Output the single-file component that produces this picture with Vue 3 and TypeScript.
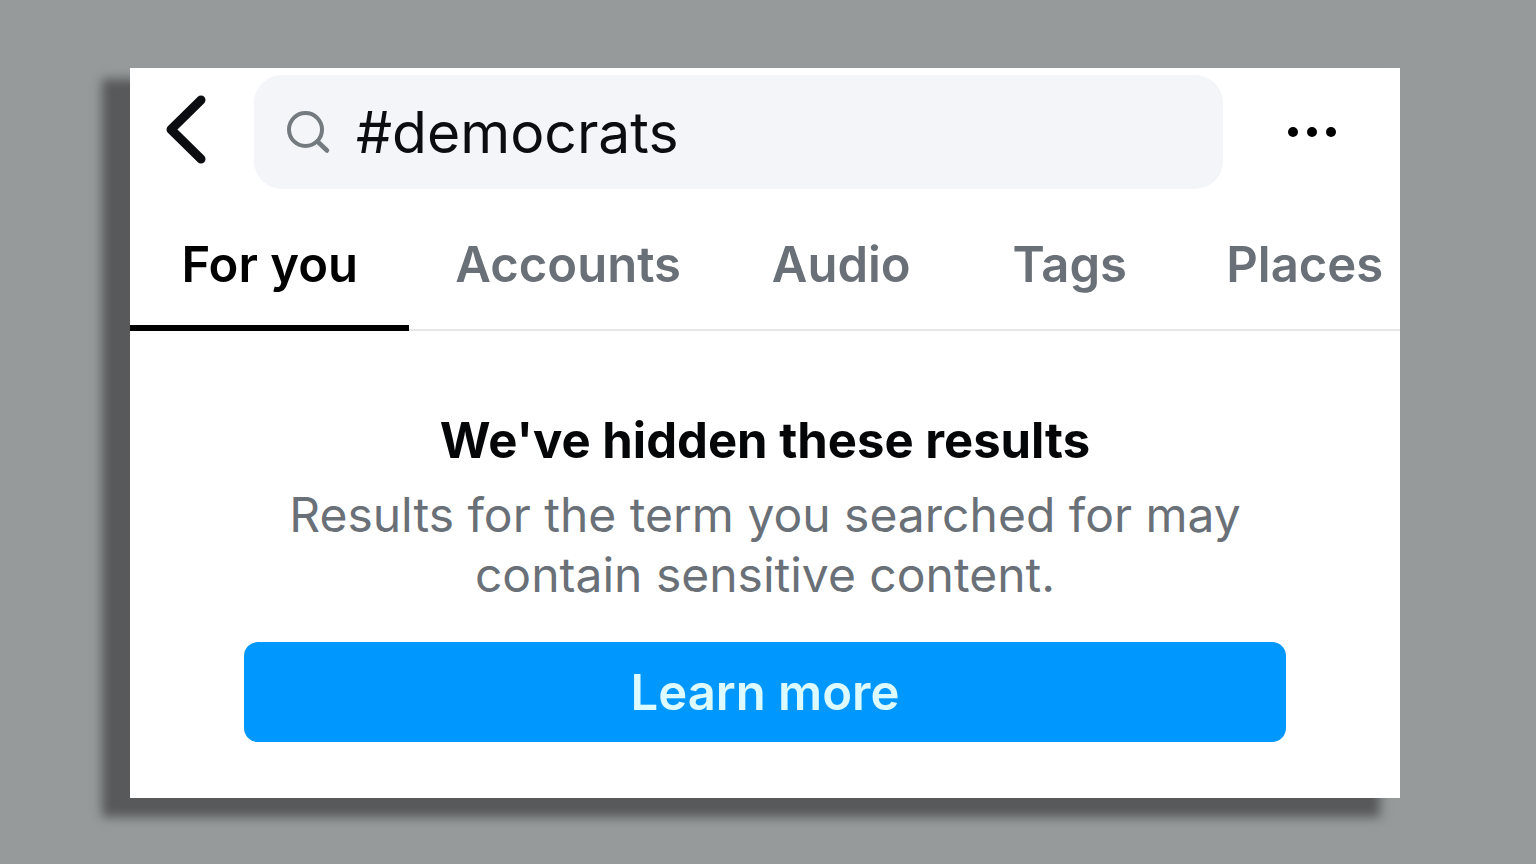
<script setup lang="ts">
import { ref } from 'vue'

const query = ref<string>('#democrats')
const tabs: string[] = ['For you', 'Accounts', 'Audio', 'Tags', 'Places']
const activeTab = ref<string>('For you')
</script>

<template>
  <div class="page">
    <main class="card">
      <header class="bar">
        <button class="icon-button back" type="button" aria-label="Back">
          <svg width="48" height="72" viewBox="0 0 48 72" aria-hidden="true">
            <path d="M39 7 9 36.500 39 66" fill="none" stroke="#0b0d10" stroke-width="9" stroke-linecap="round" stroke-linejoin="round" />
          </svg>
        </button>
        <label class="search">
          <svg width="46" height="46" viewBox="0 0 46 46" aria-hidden="true">
            <circle cx="19.500" cy="20.500" r="16.500" fill="none" stroke="#737a80" stroke-width="4" />
            <path d="M31.500 32.500 41 41.500" fill="none" stroke="#737a80" stroke-width="4.500" stroke-linecap="round" />
          </svg>
          <input v-model="query" type="text" aria-label="Search" />
        </label>
        <button class="icon-button more" type="button" aria-label="More options">
          <svg width="50" height="12" viewBox="0 0 50 12" aria-hidden="true">
            <circle cx="6" cy="6" r="5" />
            <circle cx="25" cy="6" r="5" />
            <circle cx="44" cy="6" r="5" />
          </svg>
        </button>
      </header>

      <nav class="tabs" role="tablist">
        <button
          v-for="tab in tabs"
          :key="tab"
          class="tab"
          :class="{ active: tab === activeTab }"
          type="button"
          role="tab"
          :aria-selected="tab === activeTab"
          @click="activeTab = tab"
        >
          {{ tab }}
        </button>
      </nav>

      <section class="notice">
        <h1>We've hidden these results</h1>
        <p>Results for the term you searched for may contain sensitive content.</p>
        <button class="learn" type="button">Learn more</button>
      </section>
    </main>
  </div>
</template>

<style>
body {
  margin: 0;
  background: #969a9b;
}
</style>

<style scoped>
.page {
  box-sizing: border-box;
  min-height: 100vh;
  padding: 68px 136px 66px 130px;
  display: flex;
  background: #969a9b;
  font-family: Inter, "Liberation Sans", sans-serif;
}
.card {
  flex: 1;
  min-width: 0;
  background: #fff;
  box-shadow: -24px 15px 10px 4px #58595b;
}
button {
  font-family: inherit;
  border: 0;
  margin: 0;
  padding: 0;
  background: none;
  cursor: pointer;
}
.bar {
  display: flex;
  align-items: center;
  padding-top: 7px;
}
.icon-button {
  display: flex;
  align-items: center;
  justify-content: center;
}
.back {
  width: 124px;
  padding-right: 12px;
  padding-bottom: 6px;
  box-sizing: border-box;
}
.more {
  width: 177px;
}
.search {
  flex: 1;
  min-width: 0;
  box-sizing: border-box;
  height: 114px;
  padding: 0 32px;
  display: flex;
  align-items: center;
  gap: 24px;
  border-radius: 28px;
  background: #f3f5f9;
}
.search svg {
  flex: none;
}
.search input {
  flex: 1;
  min-width: 0;
  padding: 2px 0 0;
  border: 0;
  outline: 0;
  background: none;
  color: #0b0d10;
  font: 400 57px/72px Inter, "Liberation Sans", sans-serif;
}
.tabs {
  display: grid;
  grid-template-columns: 22% 25% 18% 18% 19%;
  overflow: hidden;
  box-shadow: inset 0 -2px #e4e6e8;
}
.tab {
  height: 142px;
  padding-top: 16px;
  box-sizing: border-box;
  border-bottom: 6px solid transparent;
  color: #6a7077;
  font-size: 49px;
  font-weight: 600;
  line-height: 60px;
  white-space: nowrap;
}
.tab.active {
  color: #000;
  border-bottom-color: #000;
}
.notice {
  padding: 80px 114px 56px;
  text-align: center;
}
h1 {
  margin: 0;
  color: #050607;
  font-size: 49px;
  font-weight: 700;
  line-height: 60px;
}
p {
  margin: 14px 0 37px;
  color: #6a7077;
  font-size: 48px;
  line-height: 60px;
}
.learn {
  width: 100%;
  height: 100px;
  border-radius: 14px;
  background: #0098ff;
  color: #dcfaff;
  font-size: 49px;
  font-weight: 600;
}
</style>
